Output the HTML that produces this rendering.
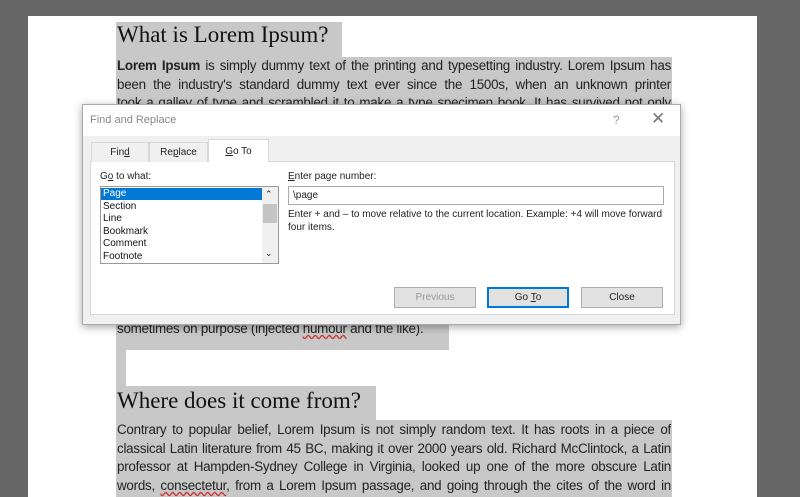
<!DOCTYPE html>
<html style="width:800px;height:497px;overflow:hidden"><head><style>
*{margin:0;padding:0;box-sizing:border-box}
body{width:800px;height:497px;overflow:hidden;background:#666;position:relative;font-family:"Liberation Sans",sans-serif}
.page{position:absolute;left:28px;top:16px;width:729px;height:481px;background:#fff}
.hl{position:absolute;background:#c8c8c8}
.h{position:absolute;font-family:"Liberation Serif",serif;font-size:23px;color:#111}
.p{position:absolute;left:117px;width:554px;font-size:13.4px;color:#222;line-height:18.7px;letter-spacing:-0.25px}
.p div{text-align:justify;text-align-last:justify;white-space:nowrap;height:18.7px}
.dlg{position:absolute;left:82px;top:104px;width:599px;height:221px;background:#f0f0f0;border:1px solid #aaa;box-shadow:0 2px 8px rgba(0,0,0,.35);font-size:10px;color:#222}
.tb{position:absolute;left:0;top:0;width:597px;height:31px;background:#fff}
.panel{position:absolute;left:7px;top:56px;width:585px;height:154px;background:#fff;border:1px solid #d8d8d8}
.tab{position:absolute;top:37px;height:20px;border:1px solid #d8d8d8;border-bottom:none;background:#f0f0f0;text-align:center;line-height:19px}
.btn{position:absolute;top:182px;width:82px;height:21px;border:1px solid #adadad;background:#e1e1e1;text-align:center;line-height:19px}
.t{position:absolute;white-space:nowrap}
</style></head><body>
<div class="page"></div>
<div class="hl" style="left:116px;top:22px;width:226px;height:35px"></div>
<div class="hl" style="left:116px;top:57px;width:556px;height:47px"></div>
<div class="h" style="left:117px;top:22px">What is Lorem Ipsum?</div>
<div class="p" style="top:57px">
<div><b>Lorem Ipsum</b> is simply dummy text of the printing and typesetting industry. Lorem Ipsum has</div>
<div>been the industry's standard dummy text ever since the 1500s, when an unknown printer</div>
<div>took a galley of type and scrambled it to make a type specimen book. It has survived not only</div>
</div>
<div class="hl" style="left:116px;top:318px;width:333px;height:32px"></div>
<div class="hl" style="left:116px;top:350px;width:10px;height:36px"></div>
<div class="p" style="top:320px"><div style="text-align:left;text-align-last:left">sometimes on purpose (injected <span style="text-decoration:underline wavy #c33">humour</span> and the like).</div></div>
<div class="hl" style="left:116px;top:386px;width:260px;height:34px"></div>
<div class="hl" style="left:116px;top:420px;width:556px;height:77px"></div>
<div class="h" style="left:117px;top:388px">Where does it come from?</div>
<div class="p" style="top:421px;height:76px;overflow:hidden">
<div>Contrary to popular belief, Lorem Ipsum is not simply random text. It has roots in a piece of</div>
<div>classical Latin literature from 45 BC, making it over 2000 years old. Richard McClintock, a Latin</div>
<div>professor at Hampden-Sydney College in Virginia, looked up one of the more obscure Latin</div>
<div>words, <span style="text-decoration:underline wavy #c33">consectetur</span>, from a Lorem Ipsum passage, and going through the cites of the word in</div>
<div style="margin-top:-1px">classical literature, discovered the undoubtable source. Lorem Ipsum comes from sections</div>
</div>
<div class="dlg">
<div class="tb"></div>
<div class="t" style="left:7px;top:9px;font-size:11px;color:#888">Find and Replace</div>
<div class="t" style="left:530px;top:8px;font-size:12px;color:#999">?</div>
<div class="t" style="left:568px;top:4px;font-size:17px;color:#777">✕</div>
<div class="panel"></div>
<div class="tab" style="left:8px;width:58px">Fin<u>d</u></div>
<div class="tab" style="left:66px;width:59px">Re<u>p</u>lace</div>
<div class="tab" style="left:125px;top:34px;height:23px;width:61px;background:#fff;line-height:23px;z-index:2"><u>G</u>o To</div>
<div class="t" style="left:17px;top:66px"><span>G<u>o</u> to what:</span></div>
<div style="position:absolute;left:17px;top:81px;width:179px;height:78px;border:1px solid #999;background:#fff"></div>
<div style="position:absolute;left:18px;top:83px;width:161px;height:12px;background:#0078d7"></div>
<div style="position:absolute;left:179px;top:82px;width:16px;height:76px;background:#f0f0f0"></div>
<div style="position:absolute;left:180px;top:99px;width:14px;height:19px;background:#c4c4c4"></div>
<div class="t" style="left:182px;top:84px;font-size:9px">⌃</div>
<div class="t" style="left:182px;top:143px;font-size:9px">⌄</div>
<div class="t" style="left:20px;top:83px;line-height:12.5px;color:#111">
<div style="color:#fff">Page</div><div>Section</div><div>Line</div><div>Bookmark</div><div>Comment</div><div>Footnote</div></div>
<div class="t" style="left:205px;top:66px"><u>E</u>nter page number:</div>
<div style="position:absolute;left:205px;top:81px;width:376px;height:19px;border:1px solid #aaa;background:#fff;padding:3px 4px">\page</div>
<div class="t" style="left:205px;top:104px;line-height:12.5px">Enter + and – to move relative to the current location. Example: +4 will move forward<br>four items.</div>
<div class="btn" style="left:311px;color:#999">Previous</div>
<div class="btn" style="left:404px;border:1px solid #0078d7;box-shadow:inset 0 0 0 1px #0078d7">Go <u>T</u>o</div>
<div class="btn" style="left:498px">Close</div>
</div>
</body></html>
